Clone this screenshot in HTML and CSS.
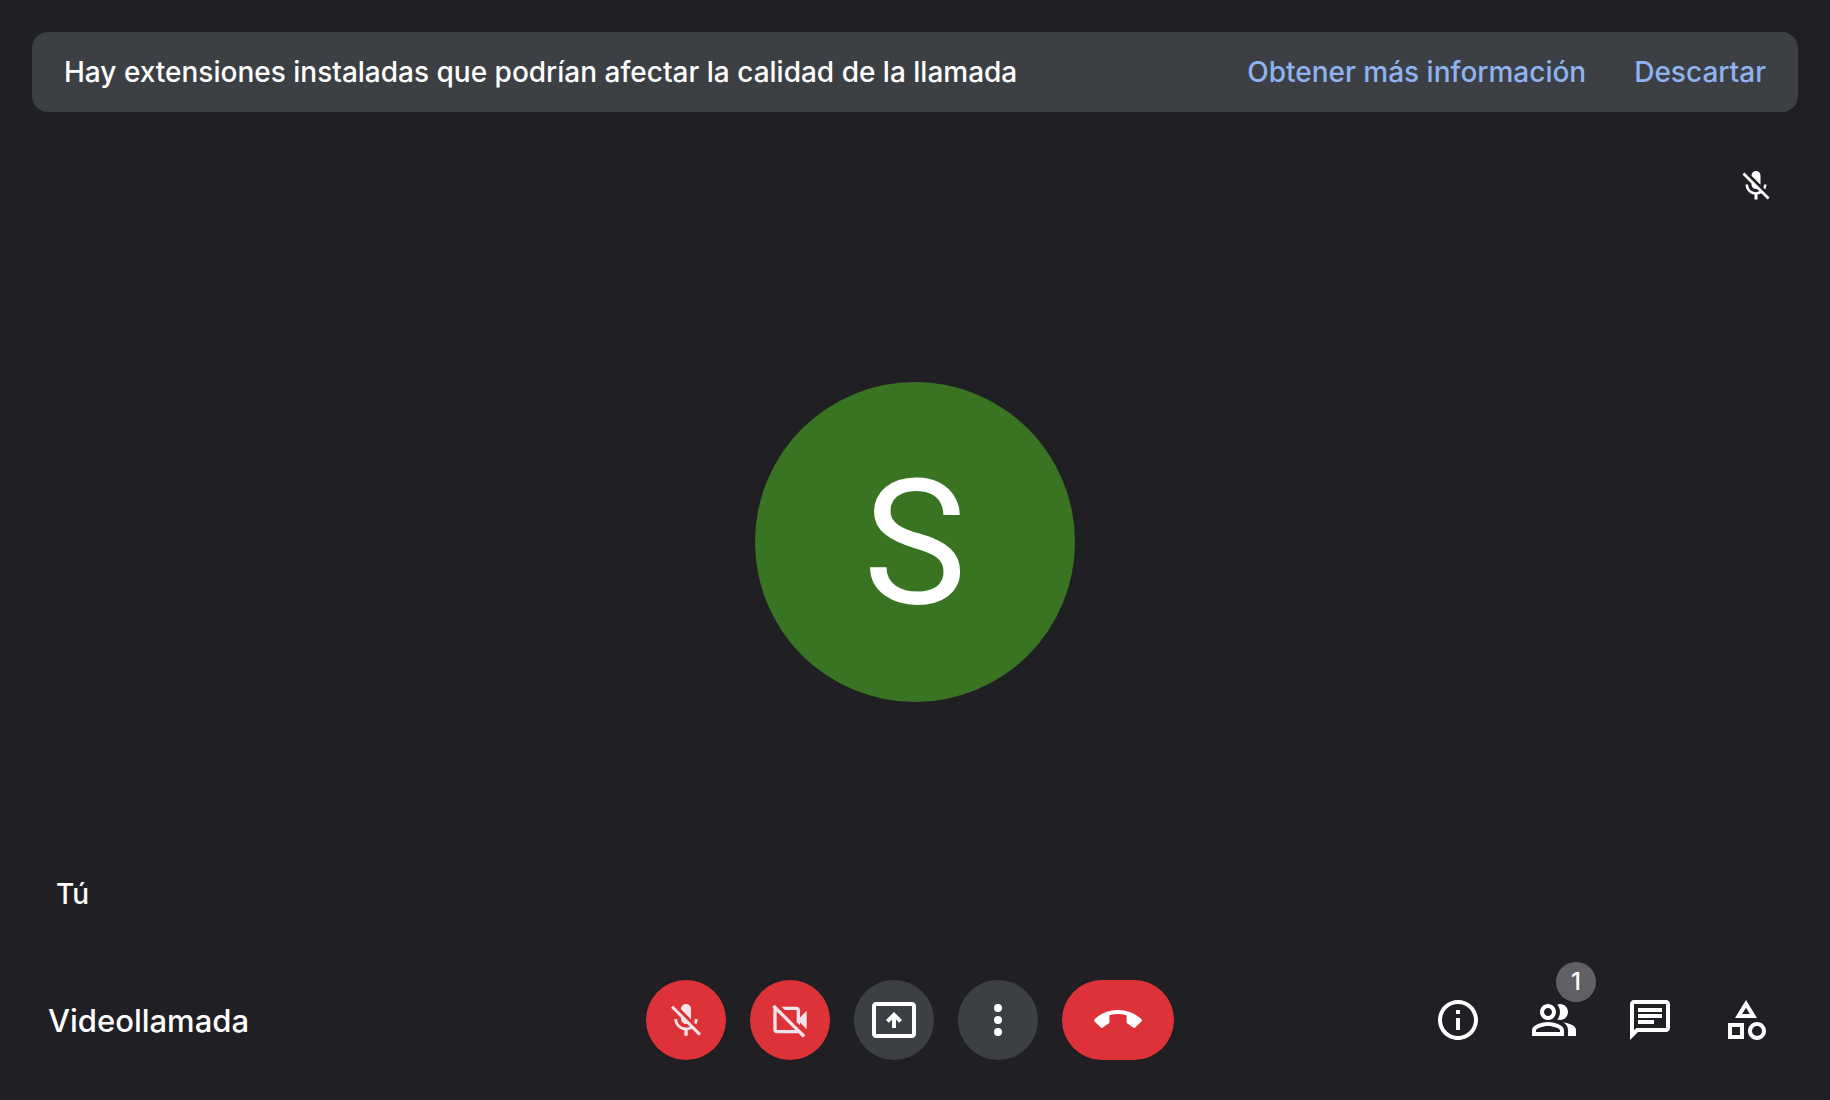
FILE: index.html
```html
<!DOCTYPE html>
<html lang="es">
<head>
    <meta charset="UTF-8">
    <meta name="viewport" content="width=device-width, initial-scale=1.0">
    <title>Videollamada</title>
    <link rel="stylesheet" href="styles.css">
</head>
<body>

    <div class="notice" role="status">
        <p class="notice-text">Hay extensiones instaladas que podrían afectar la calidad de la llamada</p>
        <a class="notice-link" href="#">Obtener más información</a>
        <button class="notice-link" type="button">Descartar</button>
    </div>

    <main class="tile">
        <svg class="icon icon-small tile-muted" viewBox="0 0 24 24"><path d="M19 11h-1.7c0 .74-.16 1.43-.43 2.05l1.23 1.23c.56-.98.9-2.09.9-3.28zm-4.02.17c0-.06.02-.11.02-.17V5c0-1.66-1.34-3-3-3S9 3.34 9 5v.18l5.98 5.99zM4.27 3L3 4.27l6.01 6.01V11c0 1.66 1.33 3 2.99 3 .22 0 .44-.03.65-.08l1.66 1.66c-.71.33-1.5.52-2.31.52-2.76 0-5.3-2.1-5.3-5.1H5c0 3.41 2.72 6.23 6 6.72V21h2v-3.28c.91-.13 1.77-.45 2.54-.9L19.73 21 21 19.73 4.27 3z"/></svg>
        <div class="avatar">S</div>
        <div class="tile-name">Tú</div>
    </main>

    <footer class="bar">
        <h1 class="title">Videollamada</h1>

        <div class="controls">
            <button class="control control-off" type="button" aria-label="Activar micrófono">
                <svg class="icon icon-medium" viewBox="0 -0.4 24 24"><path d="M19 11h-1.7c0 .74-.16 1.43-.43 2.05l1.23 1.23c.56-.98.9-2.09.9-3.28zm-4.02.17c0-.06.02-.11.02-.17V5c0-1.66-1.34-3-3-3S9 3.34 9 5v.18l5.98 5.99zM4.27 3L3 4.27l6.01 6.01V11c0 1.66 1.33 3 2.99 3 .22 0 .44-.03.65-.08l1.66 1.66c-.71.33-1.5.52-2.31.52-2.76 0-5.3-2.1-5.3-5.1H5c0 3.41 2.72 6.23 6 6.72V21h2v-3.28c.91-.13 1.77-.45 2.54-.9L19.73 21 21 19.73 4.27 3z"/></svg>
            </button>
            <button class="control control-off" type="button" aria-label="Activar cámara">
                <svg class="icon icon-medium" viewBox="0 0 24 24"><path d="M18 10.48V6c0-1.1-.9-2-2-2H6.83l2 2H16v7.17l2 2v-1.65l4 3.98v-11l-4 3.98zM16 16L6 6 4 4 2.81 2.81 1.39 4.22l.85.85C2.09 5.35 2 5.66 2 6v12c0 1.1.9 2 2 2h12c.34 0 .65-.09.93-.24l2.85 2.85 1.41-1.41L18 18l-2-2zM4 18V6.83L15.17 18H4z"/></svg>
            </button>
            <button class="control" type="button" aria-label="Presentar ahora">
                <svg class="icon" viewBox="0 0 24 24"><path d="M21 3H3c-1.1 0-2 .9-2 2v14c0 1.1.9 2 2 2h18c1.1 0 2-.9 2-2V5c0-1.1-.9-2-2-2zm0 16H3V5h18v14zM11 16h2v-4.2l1.6 1.6L16 12l-4-4-4 4 1.4 1.4 1.6-1.6z"/></svg>
            </button>
            <button class="control" type="button" aria-label="Más opciones">
                <svg class="icon" viewBox="0 0 24 24"><circle cx="12" cy="6" r="2"/><circle cx="12" cy="12" r="2"/><circle cx="12" cy="18" r="2"/></svg>
            </button>
            <button class="control control-end" type="button" aria-label="Salir de la llamada">
                <svg class="icon" viewBox="0 0 24 24"><path d="M12 7C7.5 7 3.4 8.7.3 11.6c-.4.4-.4.7 0 1.1l3.1 3c.3.3.7.3 1 .1l2.9-2c.3-.2.4-.4.4-.7V9.6C9.1 9.2 10.5 9 12 9s2.900.2 4.300.6v3.500c0 .3.100.5.400.700l2.900 2c.3.200.7.200 1-.1l3.100-3c.4-.4.4-.7 0-1.100C20.600 8.700 16.500 7 12 7z"/></svg>
            </button>
        </div>

        <div class="panels">
            <button class="panel" type="button" aria-label="Detalles de la reunión">
                <svg class="icon" viewBox="0 0 24 24"><path d="M11 7h2v2h-2zm0 4h2v6h-2zm1-9C6.48 2 2 6.48 2 12s4.48 10 10 10 10-4.48 10-10S17.52 2 12 2zm0 18c-4.41 0-8-3.59-8-8s3.59-8 8-8 8 3.59 8 8-3.59 8-8 8z"/></svg>
            </button>
            <button class="panel" type="button" aria-label="Mostrar a todos">
                <svg class="icon" viewBox="0 0 24 24"><path d="M15 8c0-1.42-.5-2.73-1.33-3.76.42-.14.86-.24 1.33-.24 2.21 0 4 1.79 4 4s-1.79 4-4 4c-.47 0-.91-.1-1.33-.24A5.98 5.98 0 0 0 15 8zm1.66 5.13C18.03 14.06 19 15.32 19 17v3h4v-3c0-2.18-3.58-3.47-6.34-3.87zM9 6c-1.1 0-2 .9-2 2s.9 2 2 2 2-.9 2-2-.9-2-2-2m0-2c2.21 0 4 1.79 4 4s-1.79 4-4 4-4-1.79-4-4 1.79-4 4-4zm0 11c-2.7 0-5.8 1.29-6 2.01V18h12v-1c-.2-.71-3.3-2-6-2m0-2c2.67 0 8 1.34 8 4v3H1v-3c0-2.66 5.33-4 8-4z"/></svg>
                <span class="badge">1</span>
            </button>
            <button class="panel" type="button" aria-label="Chat con todos">
                <svg class="icon" viewBox="0 0 24 24"><path d="M4 4h16v12H5.17L4 17.17V4m0-2c-1.1 0-1.99.9-1.99 2L2 22l4-4h14c1.1 0 2-.9 2-2V4c0-1.1-.9-2-2-2H4zm2 10h8v2H6v-2zm0-3h12v2H6V9zm0-3h12v2H6V6z"/></svg>
            </button>
            <button class="panel" type="button" aria-label="Actividades">
                <svg class="icon" viewBox="0 0 24 24"><path d="M12 2l-5.5 9h11L12 2zm0 3.84L13.93 9h-3.87L12 5.84zM17.5 13c-2.49 0-4.5 2.01-4.5 4.5s2.01 4.5 4.5 4.5 4.5-2.01 4.5-4.5-2.01-4.5-4.5-4.5zm0 7a2.5 2.5 0 0 1 0-5 2.5 2.5 0 0 1 0 5zM3 21.5h8v-8H3v8zm2-6h4v4H5v-4z"/></svg>
            </button>
        </div>
    </footer>

</body>
</html>
```
FILE: styles.css
```css
* {
    box-sizing: border-box;
}

body {
    margin: 0;
    min-height: 100vh;
    display: flex;
    flex-direction: column;
    background-color: #201f24;
    color: #fff;
    font-family: "Inter", sans-serif;
    font-size: 28px;
    font-weight: 500;
}

button {
    border: 0;
    padding: 0;
    background: none;
    color: inherit;
    font: inherit;
    cursor: pointer;
}

.icon {
    display: block;
    width: 48px;
    height: 48px;
    fill: currentColor;
}

.icon-medium {
    width: 40px;
    height: 40px;
}

.icon-small {
    width: 36px;
    height: 36px;
}

/* notice */

.notice {
    display: flex;
    align-items: center;
    gap: 48px;
    min-height: 80px;
    margin: 32px 32px 0;
    padding: 0 32px;
    border-radius: 16px;
    background-color: #3c4044;
}

.notice-text {
    flex: 1;
    margin: 0;
}

.notice-link {
    color: #8fb2f0;
    text-decoration: none;
}

.notice-link:hover {
    text-decoration: underline;
}

/* own video */

.tile {
    flex: 1;
    display: grid;
    grid-template-rows: 1fr auto 1fr;
    margin: 32px 32px 0;
    padding: 24px;
}

.tile-muted {
    justify-self: end;
}

.avatar {
    display: flex;
    align-items: center;
    justify-content: center;
    justify-self: center;
    width: 320px;
    height: 320px;
    padding-top: 4px;
    border-radius: 50%;
    background-color: #397422;
    font-family: "Roboto", sans-serif;
    font-size: 174px;
    font-weight: 400;
    line-height: 1;
}

.tile-name {
    align-self: end;
    line-height: 44px;
}

/* bottom bar */

.bar {
    display: grid;
    grid-template-columns: 1fr auto 1fr;
    align-items: center;
    min-height: 160px;
    padding: 0 36px 0 26px;
}

.title {
    margin: 0;
    padding-left: 22px;
    font-size: 31px;
    font-weight: 500;
}

.controls {
    display: flex;
    gap: 24px;
}

.control {
    display: flex;
    align-items: center;
    justify-content: center;
    width: 80px;
    height: 80px;
    border-radius: 40px;
    background-color: #3c4044;
}

.control-off {
    background-color: #dd3338;
    color: #f3e4ec;
}

.control-end {
    width: 112px;
    background-color: #dd3338;
}

.panels {
    display: flex;
    justify-content: flex-end;
}

.panel {
    position: relative;
    display: flex;
    align-items: center;
    justify-content: center;
    width: 96px;
    height: 96px;
}

.badge {
    position: absolute;
    top: -10px;
    right: 6px;
    width: 40px;
    border-radius: 50%;
    background-color: #606166;
    font-size: 24px;
    line-height: 40px;
}
```
